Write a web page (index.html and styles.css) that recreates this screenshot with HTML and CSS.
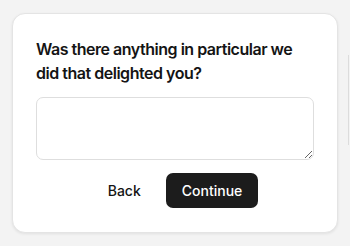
FILE: index.html
```html
<!DOCTYPE html>
<html lang="en">
<head>
<meta charset="utf-8">
<title>Feedback</title>
<meta name="viewport" content="width=device-width,initial-scale=1">
<link rel="stylesheet" href="styles.css">
</head>
<body>
<main class="stage">
  <form class="card" onsubmit="return false">
    <h2 class="question">Was there anything in particular we did that delighted you?</h2>
    <textarea class="answer" aria-label="Your answer"></textarea>
    <div class="actions">
      <button type="button" class="btn ghost">Back</button>
      <button type="submit" class="btn solid">Continue</button>
    </div>
  </form>
  <div class="peek"></div>
</main>
</body>
</html>
```

FILE: styles.css
```css
:root{--bg:#f3f3f3;--card:#fff;--line:#dedede;--ink:#141414;--btn:#1c1c1c}
*{box-sizing:border-box;margin:0;font-family:Inter,"Noto Sans",sans-serif}
html,body{height:100%}
body{background:var(--bg);color:var(--ink);overflow:hidden}
.stage{display:flex;align-items:flex-start;padding:13px 0 0 12px;gap:10px}
.card{flex:0 0 326px;background:var(--card);border-radius:13px;border:1px solid #e4e4e4;box-shadow:0 1px 3px rgba(0,0,0,.08);padding:23px 23px 24px;display:flex;flex-direction:column}
.question{font-size:16px;font-weight:600;line-height:24px;letter-spacing:-.03em}
.answer{margin-top:12px;height:63px;width:100%;resize:vertical;border:1px solid var(--line);border-radius:7px;padding:8px 10px;font-size:14px;background:#fff}
.answer:focus{outline:2px solid var(--btn)}
.actions{margin-top:13px;display:flex;justify-content:center;gap:9px}
.btn{border:none;border-radius:7px;font-size:14px;font-weight:500;line-height:20px;padding:8px 16px;height:35px;cursor:pointer}
.ghost{background:none;color:var(--ink)}
.solid{background:var(--btn);color:#fff}
.peek{flex:0 0 1px;height:90px;margin-top:42px;background:#dcdcdc}
```
